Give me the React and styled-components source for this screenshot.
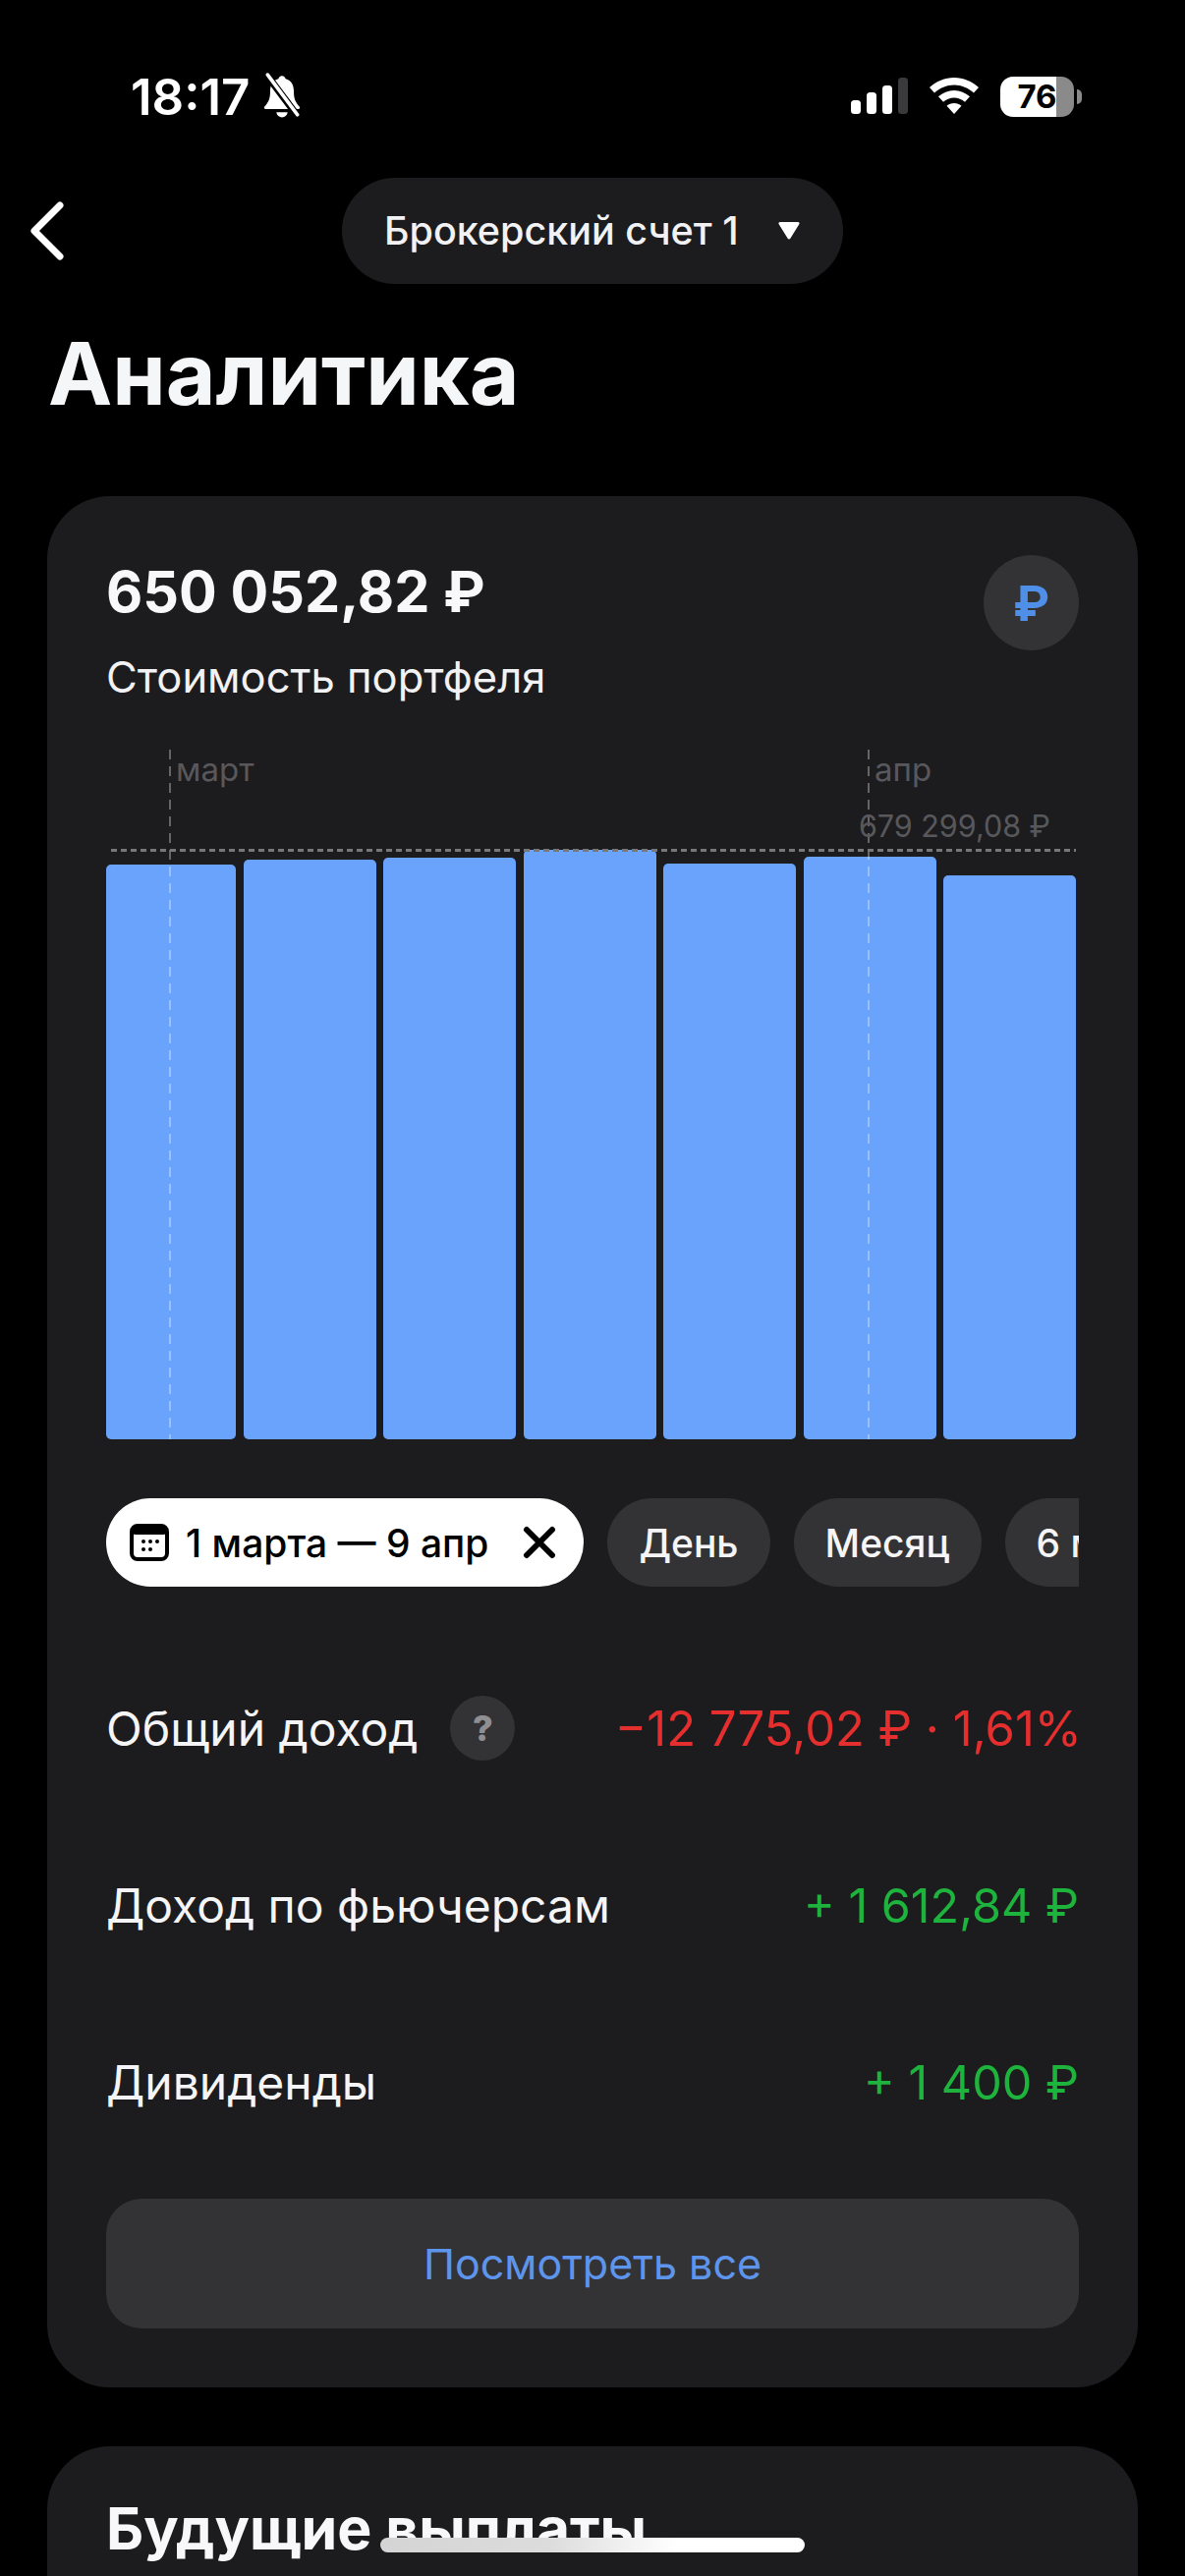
import React from 'react'
import styled, { createGlobalStyle } from 'styled-components';

const GlobalStyle = createGlobalStyle`
html, body {
  margin: 0;
  padding: 0;
  background: #000;
}
* {
  box-sizing: border-box;
}
`;

const Page = styled.div`
position: relative;
width: 1206px;
height: 2622px;
overflow: hidden;
background: #000;
color: #fff;
font-family: Inter, "Noto Sans", sans-serif;
`;

const StatusBar = styled.div`
display: flex;
justify-content: space-between;
align-items: center;
height: 56px;
margin-top: 70px;
padding: 0 113px 0 133px;
`;

const StatusLeft = styled.div`
display: flex;
align-items: center;
gap: 11px;
`;

const Time = styled.span`
font-size: 51px;
font-weight: 600;
`;

const StatusRight = styled.div`
display: flex;
align-items: center;
gap: 22px;
`;

const Battery = styled.div`
position: relative;
width: 75px;
height: 41px;
border-radius: 13px;
background: linear-gradient(to right, #fff 76%, #8a8a8a 76%);
color: #000;
font-size: 33px;
font-weight: 700;
line-height: 41px;
text-align: center;
&::after {
  content: "";
  position: absolute;
  right: -8px;
  top: 13px;
  width: 5px;
  height: 15px;
  border-radius: 0 8px 8px 0;
  background: #8a8a8a;
}
`;

const Nav = styled.div`
display: grid;
grid-template-columns: 1fr 510px 1fr;
align-items: center;
margin-top: 55px;
padding: 0 30px;
`;

const AccountPill = styled.div`
display: flex;
justify-content: space-between;
align-items: center;
height: 108px;
padding: 0 44px 0 43px;
border-radius: 54px;
background: #1c1c1e;
font-size: 39.500px;
font-weight: 500;
color: #f2f2f4;
`;

const PageTitle = styled.h1`
margin: 36px 0 0 49px;
font-size: 87.500px;
line-height: 110px;
font-weight: 700;
color: #f5f6f8;
`;

const Card = styled.div`
margin: ${p => p.$top}px 48px 0;
padding: 60px;
border-radius: 64px;
background: #1c1c1e;
`;

const FutureCard = styled(Card)`
height: 300px;
`;

const CardHead = styled.div`
display: flex;
justify-content: space-between;
align-items: flex-start;
`;

const Amount = styled.div`
margin-top: 2px;
font-size: 57.500px;
line-height: 70px;
font-weight: 700;
color: #f8f8fa;
`;

const AmountLabel = styled.div`
margin-top: 26px;
font-size: 43.500px;
line-height: 52px;
color: #f2f2f4;
`;

const CurrencyBadge = styled.div`
display: flex;
justify-content: center;
align-items: center;
width: 97px;
height: 97px;
border-radius: 50%;
background: #333335;
color: #4f8fe8;
font-size: 50px;
font-weight: 700;
`;

const Chart = styled.div`
position: relative;
height: 702px;
margin-top: 48px;
`;

const Bars = styled.div`
display: flex;
align-items: flex-end;
gap: 7.5px;
height: 100%;
`;

const Bar = styled.div`
flex: ${p => (p.$narrow ? '0 0 132px' : '0 0 135px')};
height: ${p => p.$h}px;
border-radius: 5px;
background: #6aa3fc;
`;

const MonthLine = styled.div`
position: absolute;
top: 0;
bottom: 0;
left: ${p => p.$x}px;
width: 2px;
background: repeating-linear-gradient(to bottom, rgba(255, 255, 255, 0.32) 0 10px, transparent 10px 17px);
`;

const MonthLabel = styled.span`
position: absolute;
top: 1px;
left: ${p => p.$x}px;
font-size: 33px;
line-height: 38px;
color: #58585c;
`;

const MaxLabel = styled.span`
position: absolute;
top: 59px;
right: 29px;
font-size: 30.500px;
line-height: 38px;
color: #58585c;
`;

const MaxLine = styled.div`
position: absolute;
top: 101px;
left: 5px;
right: 3px;
height: 3px;
background: repeating-linear-gradient(to right, #77777a 0 6px, transparent 6px 10px);
`;

const Chips = styled.div`
display: flex;
gap: 24px;
margin-top: 60px;
width: 990px;
overflow: hidden;
`;

const Chip = styled.div`
flex: none;
display: flex;
align-items: center;
height: 90px;
padding: 0 32px;
border-radius: 45px;
background: #333335;
font-size: 39px;
font-weight: 500;
color: #f5f5f7;
`;

const DateChip = styled(Chip)`
padding: 0 28px 0 24px;
background: #fff;
color: #000;
gap: 17px;
`;

const CloseGlyph = styled.svg`
margin-left: 18px;
`;

const Stats = styled.div`
display: flex;
flex-direction: column;
margin-top: 114px;
gap: 120px;
`;

const StatRow = styled.div`
display: flex;
justify-content: space-between;
align-items: center;
height: 60px;
`;

const StatName = styled.div`
display: flex;
align-items: center;
gap: 24px;
font-size: 48px;
color: #f5f5f7;
`;

const StatValue = styled.div`
font-size: 48.500px;
color: #1db33d;
`;

const LossValue = styled(StatValue)`
margin-right: -3px;
font-size: 49px;
color: #e52e2e;
`;

const HelpBadge = styled.div`
display: flex;
justify-content: center;
align-items: center;
width: 66px;
height: 66px;
margin-left: 9px;
border-radius: 50%;
background: #333335;
color: #8e8e93;
font-size: 36px;
font-weight: 800;
`;

const ShowAll = styled.div`
display: flex;
justify-content: center;
align-items: center;
height: 132px;
margin-top: 89px;
border-radius: 36px;
background: #333335;
color: #5e95ec;
font-size: 43px;
`;

const SectionTitle = styled.div`
margin-top: -11px;
font-size: 59px;
line-height: 70px;
font-weight: 700;
color: #f8f8fa;
`;

const HomeIndicator = styled.div`
position: absolute;
left: 387px;
top: 2583px;
width: 432px;
height: 15px;
border-radius: 8px;
background: linear-gradient(to right, #d4d4d4 0%, #dcdcdc 40%, #fff 70%);
`;

const barHeights = [585, 590, 592, 600, 586, 593, 574];

const App = () => {
  return (
    <Page>
      <GlobalStyle />
      <StatusBar>
        <StatusLeft>
          <Time>18:17</Time>
          <svg width="44" height="48" viewBox="0 0 42 46">
            <path d="M21 3c-2 0-3.200 1.300-3.500 3C11.800 7.500 9.500 12 9.500 18c0 6-1 10.500-5.500 15-.8 1-.3 2.500 1.200 2.500h31.600c1.500 0 2-1.500 1.200-2.500-4.500-4.500-5.500-9-5.500-15 0-6-2.300-10.500-8-12-.3-1.700-1.500-3-3.500-3z" fill="#fff" />
            <path d="M15.500 38.500h11c-.5 3-2.700 5-5.500 5s-5-2-5.500-5z" fill="#fff" />
            <path d="M6 2l30 40" stroke="#000" strokeWidth="7" />
            <path d="M7 2l29 39" stroke="#fff" strokeWidth="3.500" strokeLinecap="round" />
          </svg>
        </StatusLeft>
        <StatusRight>
          <svg width="58" height="38" viewBox="0 0 58 38">
            <rect x="0" y="23" width="10" height="14" rx="3.500" fill="#fff" />
            <rect x="16" y="15" width="10" height="22" rx="3.500" fill="#fff" />
            <rect x="32" y="8" width="10" height="29" rx="3.500" fill="#fff" />
            <rect x="48" y="0" width="10" height="37" rx="3.500" fill="#3a3a3c" />
          </svg>
          <svg width="50" height="38" viewBox="0 0 50 38">
            <path d="M25 0C15.500 0 7 3.700 0 10l5 5.500C10.500 10.500 17.500 7.500 25 7.500s14.500 3 20 8l5-5.500C43 3.700 34.500 0 25 0z" fill="#fff" />
            <path d="M25 13c-6 0-11.500 2.300-16 6.300l5 5.500c3-2.700 6.800-4.300 11-4.300s8 1.600 11 4.300l5-5.500C36.500 15.300 31 13 25 13z" fill="#fff" />
            <path d="M25 26c-2.800 0-5.400 1-7.500 2.800L25 37l7.500-8.200C30.400 27 27.800 26 25 26z" fill="#fff" />
          </svg>
          <Battery>76</Battery>
        </StatusRight>
      </StatusBar>

      <Nav>
        <svg width="36" height="60" viewBox="0 0 36 60">
          <path d="M31 4L5 30l26 26" fill="none" stroke="#fff" strokeWidth="7" strokeLinecap="round" strokeLinejoin="round" />
        </svg>
        <AccountPill>
          Брокерский счет 1
          <svg width="22" height="20" viewBox="0 0 22 20">
            <path d="M2 1h18c1.500 0 2 1.200 1.300 2.300l-9 14.500c-.6 1-2 1-2.600 0L.7 3.300C0 2.200.5 1 2 1z" fill="#fff" />
          </svg>
        </AccountPill>
      </Nav>

      <PageTitle>Аналитика</PageTitle>

      <Card $top={70}>
        <CardHead>
          <div>
            <Amount>650 052,82 ₽</Amount>
            <AmountLabel>Стоимость портфеля</AmountLabel>
          </div>
          <CurrencyBadge>₽</CurrencyBadge>
        </CardHead>

        <Chart>
          <Bars>
            {barHeights.map((h, i) => (
              <Bar key={i} $h={h} $narrow={i === 0} />
            ))}
          </Bars>
          <MonthLine $x={64} />
          <MonthLabel $x={71}>март</MonthLabel>
          <MonthLine $x={775} />
          <MonthLabel $x={782}>апр</MonthLabel>
          <MaxLabel>679 299,08 ₽</MaxLabel>
          <MaxLine />
        </Chart>

        <Chips>
          <DateChip>
            <svg width="40" height="38" viewBox="0 0 40 38">
              <rect x="2" y="2" width="36" height="34" rx="6" fill="none" stroke="#000" strokeWidth="4" />
              <rect x="2" y="2" width="36" height="9" rx="4" fill="#000" />
              <circle cx="14" cy="18" r="2" fill="#000" />
              <circle cx="21" cy="18" r="2" fill="#000" />
              <circle cx="28" cy="18" r="2" fill="#000" />
              <circle cx="14" cy="26" r="2" fill="#000" />
              <circle cx="21" cy="26" r="2" fill="#000" />
            </svg>
            1 марта — 9 апр
            <CloseGlyph width="34" height="34" viewBox="0 0 34 34">
              <path d="M4 4l26 26M30 4L4 30" stroke="#000" strokeWidth="6" strokeLinecap="round" />
            </CloseGlyph>
          </DateChip>
          <Chip>День</Chip>
          <Chip>Месяц</Chip>
          <Chip>6 м</Chip>
        </Chips>

        <Stats>
          <StatRow>
            <StatName>
              Общий доход
              <HelpBadge>?</HelpBadge>
            </StatName>
            <LossValue>−12 775,02 ₽ · 1,61%</LossValue>
          </StatRow>
          <StatRow>
            <StatName>Доход по фьючерсам</StatName>
            <StatValue>+ 1 612,84 ₽</StatValue>
          </StatRow>
          <StatRow>
            <StatName>Дивиденды</StatName>
            <StatValue>+ 1 400 ₽</StatValue>
          </StatRow>
        </Stats>

        <ShowAll>Посмотреть все</ShowAll>
      </Card>

      <FutureCard $top={60}>
        <SectionTitle>Будущие выплаты</SectionTitle>
      </FutureCard>

      <HomeIndicator />
    </Page>
  )
}

export default App
